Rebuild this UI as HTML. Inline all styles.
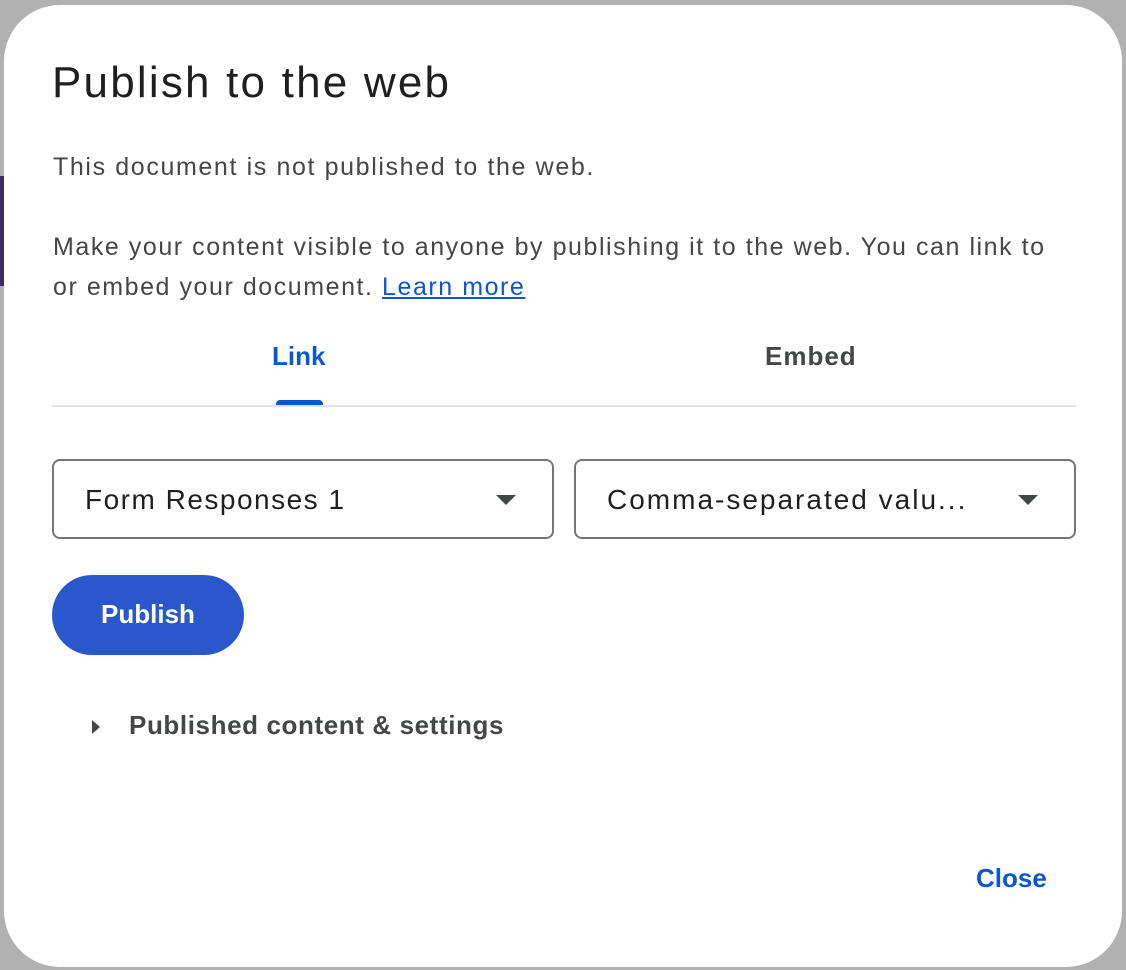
<!DOCTYPE html>
<html><head><meta charset="utf-8"><style>
*{margin:0;padding:0;box-sizing:border-box}
body{width:1126px;height:970px;background:#b1b1b1;position:relative;overflow:hidden;font-family:"Liberation Sans",Arial,sans-serif}
.strip{position:absolute;left:0;top:176px;width:6px;height:110px;background:#3c2d5e}
.dlg{position:absolute;left:4px;top:5px;width:1118px;height:962px;background:#fff;border-radius:56px}
.a{position:absolute;white-space:nowrap}
h1{position:absolute;left:52px;top:58px;font-size:44px;font-weight:400;color:#1f1f1f;letter-spacing:2.2px;white-space:nowrap}
.p{font-size:25px;color:#444746;letter-spacing:1.55px}
.sel{position:absolute;top:459px;height:80px;border:2px solid #747775;border-radius:8px;font-size:28px;color:#1f1f1f}
.sel span{position:absolute;left:31px;top:23px;white-space:nowrap}
.tri{position:absolute;right:36px;top:34px;width:0;height:0;border-left:10px solid transparent;border-right:10px solid transparent;border-top:10px solid #444746}
</style></head><body>
<div class="strip"></div>
<div class="dlg"></div>
<h1>Publish to the web</h1>
<div class="a p" style="left:53px;top:153px;letter-spacing:1.62px">This document is not published to the web.</div>
<div class="a p" style="left:53px;top:233px">Make your content visible to anyone by publishing it to the web. You can link to</div>
<div class="a p" style="left:53px;top:273px">or embed your document. <span style="color:#0b57d0;text-decoration:underline">Learn more</span></div>
<div class="a" style="left:272px;top:341px;font-size:26px;font-weight:700;color:#0b57d0">Link</div>
<div class="a" style="left:765px;top:341px;font-size:26px;font-weight:700;color:#444746;letter-spacing:1px">Embed</div>
<div class="a" style="left:276px;top:400px;width:47px;height:6px;background:#0b57d0;border-radius:4px 4px 0 0"></div>
<div class="a" style="left:52px;top:405px;width:1024px;height:2px;background:#e3e3e3"></div>
<div class="sel" style="left:52px;width:502px"><span style="letter-spacing:1.5px">Form Responses 1</span><div class="tri"></div></div>
<div class="sel" style="left:574px;width:502px"><span style="letter-spacing:2px">Comma-separated valu...</span><div class="tri"></div></div>
<div class="a" style="left:52px;top:575px;width:192px;height:80px;background:#2a58cc;border-radius:40px;color:#fff;font-size:26px;font-weight:700;text-align:center;line-height:78px">Publish</div>
<div class="a" style="left:92px;top:720px;width:0;height:0;border-top:7px solid transparent;border-bottom:7px solid transparent;border-left:8px solid #444746"></div>
<div class="a" style="left:129px;top:710px;font-size:26px;font-weight:700;color:#444746;letter-spacing:0.6px">Published content &amp; settings</div>
<div class="a" style="left:976px;top:863px;font-size:26px;font-weight:700;color:#0b57d0">Close</div>
</body></html>
